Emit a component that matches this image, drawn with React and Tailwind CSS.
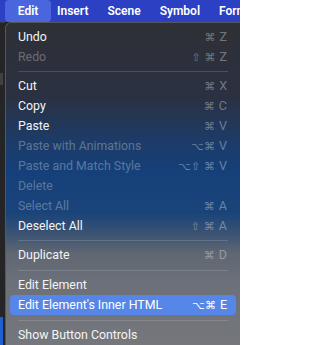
import React from "react";

const items = [
  { t: "Undo", k: ["⌘"], key: "Z" },
  { t: "Redo", k: ["⇧", "⌘"], key: "Z", dis: true },
  { sep: 9 },
  { t: "Cut", k: ["⌘"], key: "X" },
  { t: "Copy", k: ["⌘"], key: "C" },
  { t: "Paste", k: ["⌘"], key: "V" },
  { t: "Paste with Animations", k: ["⌥", "⌘"], key: "V", dis: true },
  { t: "Paste and Match Style", k: ["⌥", "⇧", "⌘"], key: "V", dis: true },
  { t: "Delete", dis: true },
  { t: "Select All", k: ["⌘"], key: "A", dis: true },
  { t: "Deselect All", k: ["⇧", "⌘"], key: "A" },
  { sep: 9 },
  { t: "Duplicate", k: ["⌘"], key: "D" },
  { sep: 10 },
  { t: "Edit Element" },
  { t: "Edit Element's Inner HTML", k: ["⌥", "⌘"], key: "E", hi: true },
  { sep: 10 },
  { t: "Show Button Controls" },
];

function Row({ it }) {
  if (it.sep) {
    return (
      <div className={it.sep === 9 ? "h-[9px] flex items-center px-[12px]" : "h-[10px] flex items-center px-[12px]"}>
        <div className="h-px w-full bg-white/15" />
      </div>
    );
  }
  const txt = it.hi ? "text-white" : it.dis ? "text-white/30" : "text-[#f4f4f5]";
  const sc = it.hi ? "text-white" : "text-white/35";
  return (
    <div className="h-[20px] px-[4px]">
      <div
        className={
          "h-full flex items-center justify-between pl-[8px] pr-[9px] rounded-[4px] " +
          (it.hi ? "bg-[#5686e7]" : "")
        }
      >
        <span className={"text-[12.35px] leading-none whitespace-nowrap " + txt}>{it.t}</span>
        {it.key && (
          <span className={"flex items-center leading-none " + sc}>
            {it.k.map((g, i) => (
              <span key={i} className="w-[13px] font-['DejaVu_Sans',sans-serif] text-[11px]">
                {g}
              </span>
            ))}
            <span className="ml-[2px] text-[12.5px]">{it.key}</span>
          </span>
        )}
      </div>
    </div>
  );
}

export default function App() {
  return (
    <div className="w-[240px] h-[345px] overflow-hidden bg-[#1d1d1f] font-['Roboto','Liberation_Sans',sans-serif] flex flex-col">
      <div className="h-[22px] w-[240px] overflow-hidden bg-[#2b40c2] flex items-center text-white text-[12px] font-semibold shrink-0">
        <div className="ml-[5px] h-full w-[46px] shrink-0 flex items-center justify-center bg-[#4a66de] rounded-[4px]">Edit</div>
        <div className="ml-[6px] shrink-0">Insert</div>
        <div className="ml-[19px] shrink-0">Scene</div>
        <div className="ml-[19px] shrink-0">Symbol</div>
        <div className="ml-[19px] min-w-0 overflow-hidden whitespace-nowrap">Format</div>
      </div>
      <div className="flex flex-1 min-h-0 w-[240px] overflow-hidden">
        <div className="w-[5px] shrink-0 flex flex-col bg-[#252527] border-t border-[#3a3a3c]">
          <div className="h-[50px]" />
          <div className="h-[12px] w-[3px] bg-[#404042]" />
          <div className="flex-1" />
          <div className="h-[28px] w-[3px] bg-[#1f5fcf]" />
        </div>
        <div className="flex-1 min-w-0 rounded-tl-[6px] border-l border-t border-[#55575c] bg-[linear-gradient(180deg,#2e3035_0px,#2b3142_75px,#1d3b66_115px,#15407a_150px,#1a4479_190px,#3a5272_210px,#5f6772_230px,#6c7079_260px,#75777c_323px)] pt-[4px]">
          {items.map((it, i) => (
            <Row key={i} it={it} />
          ))}
        </div>
      </div>
    </div>
  );
}
